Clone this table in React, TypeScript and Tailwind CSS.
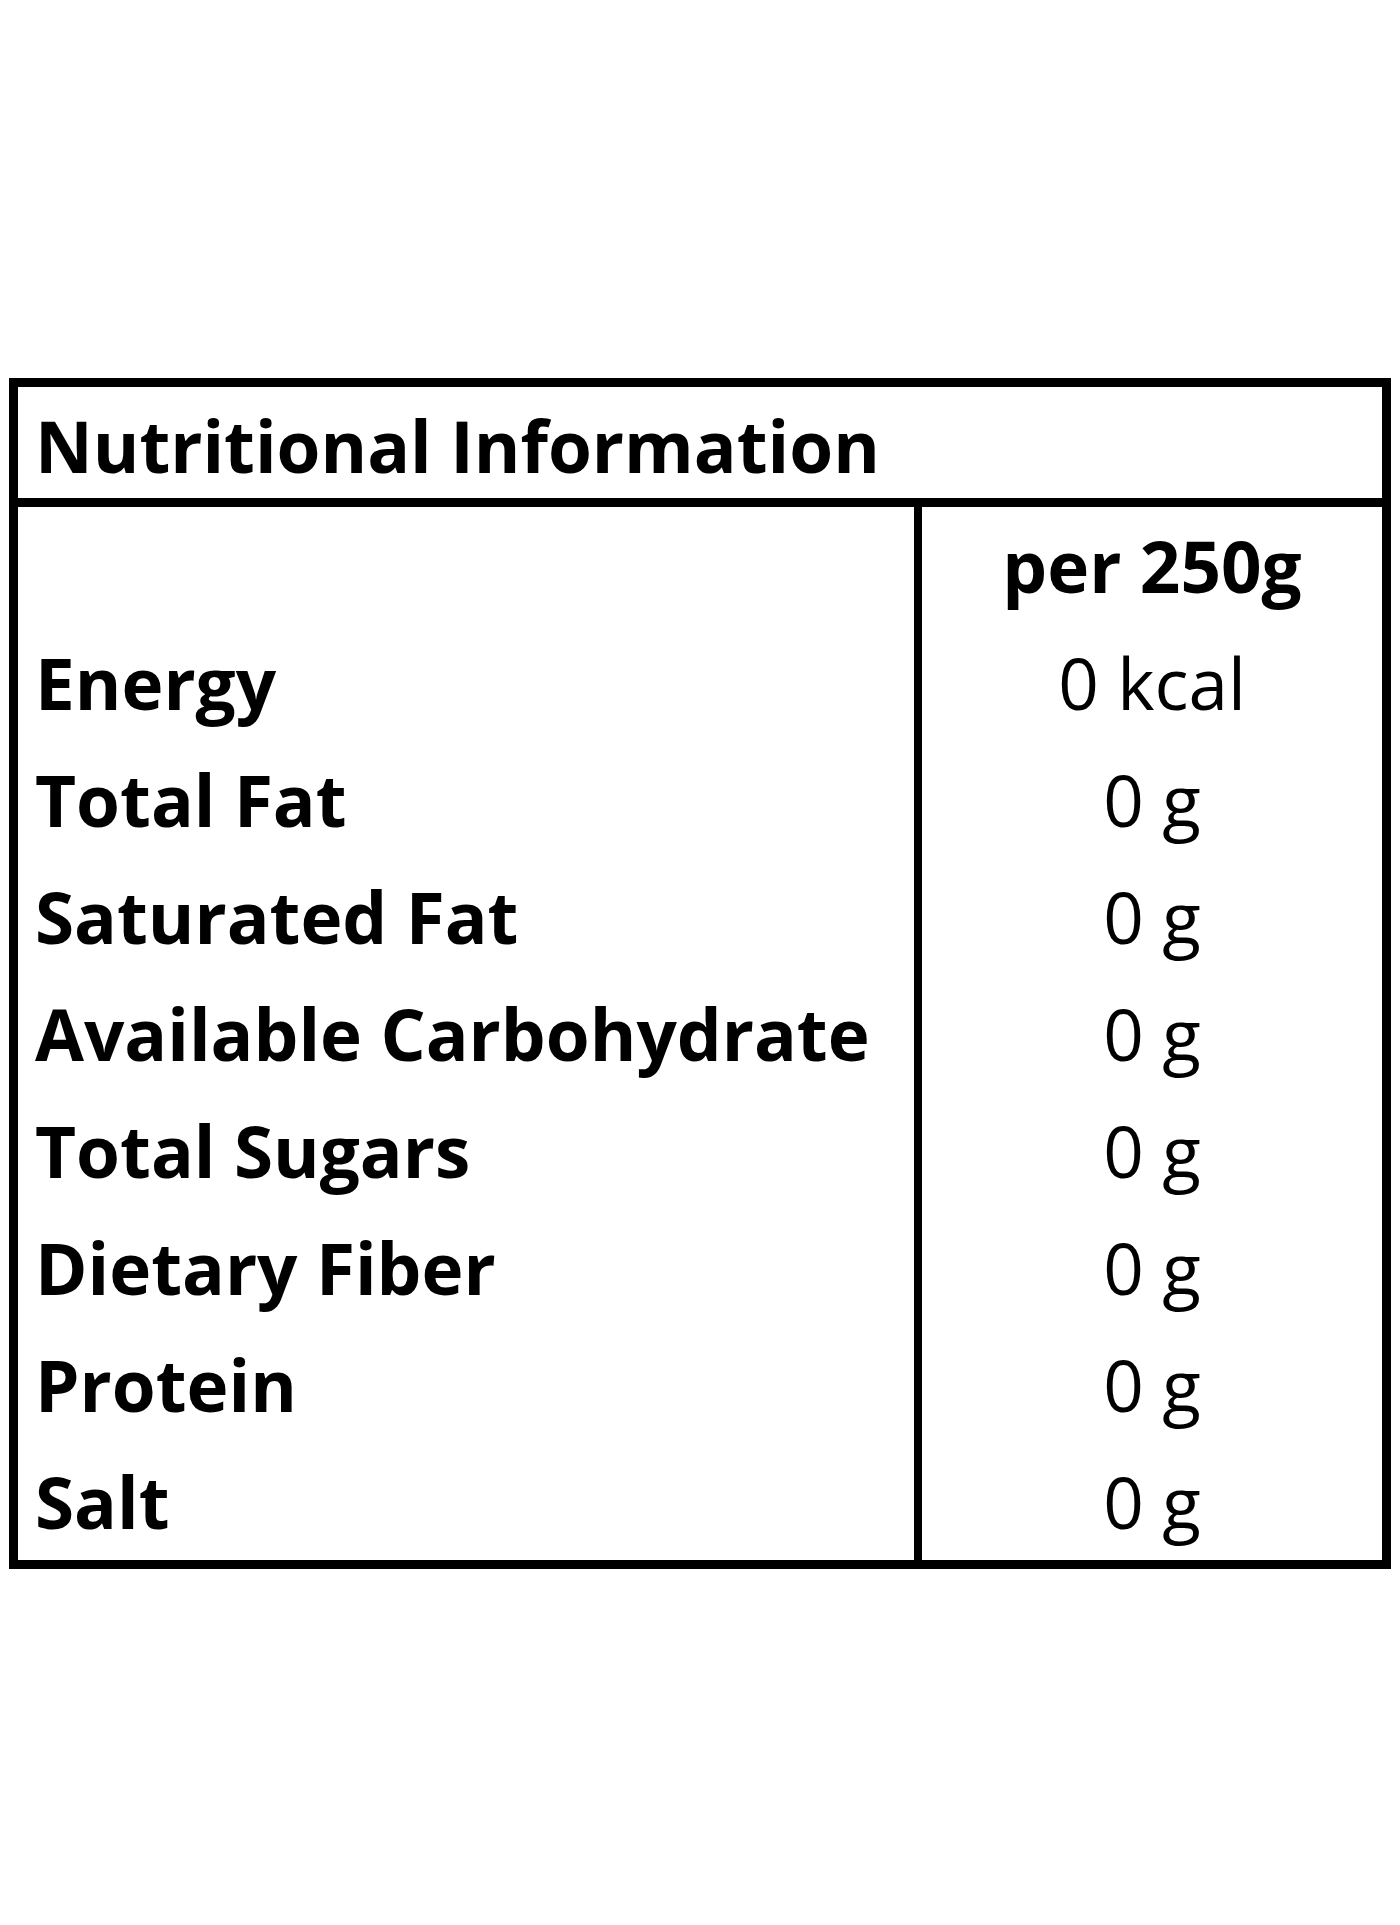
const rows = [
  { label: 'Energy', value: '0 kcal' },
  { label: 'Total Fat', value: '0 g' },
  { label: 'Saturated Fat', value: '0 g' },
  { label: 'Available Carbohydrate', value: '0 g' },
  { label: 'Total Sugars', value: '0 g' },
  { label: 'Dietary Fiber', value: '0 g' },
  { label: 'Protein', value: '0 g' },
  { label: 'Salt', value: '0 g' },
];

export default function App() {
  return (
    <div className="min-h-[1925px] w-[1400px] bg-white pt-[378px] pl-[9px] font-['Open_Sans',sans-serif] text-black">
      <div className="w-[1382px] border-[9px] border-black">
        {/* title */}
        <div className="h-[120px] border-b-[9px] border-black pt-[6px] pl-[17px] text-[71px] font-bold leading-[105px] [font-variant-ligatures:none]">
          Nutritional Information
        </div>

        {/* body */}
        <div className="grid grid-cols-[904px_1fr]">
          <div className="border-r-[8px] border-black pl-[17px] text-[71px] font-bold leading-[117px]">
            <div className="h-[117px]"></div>
            {rows.map((r) => (
              <div key={r.label} className="h-[117px] whitespace-nowrap">
                {r.label}
              </div>
            ))}
          </div>
          <div className="text-center text-[71px] leading-[117px]">
            <div className="h-[117px] font-bold">per 250g</div>
            {rows.map((r) => (
              <div key={r.label} className="h-[117px]">
                {r.value}
              </div>
            ))}
          </div>
        </div>
      </div>
    </div>
  );
}
